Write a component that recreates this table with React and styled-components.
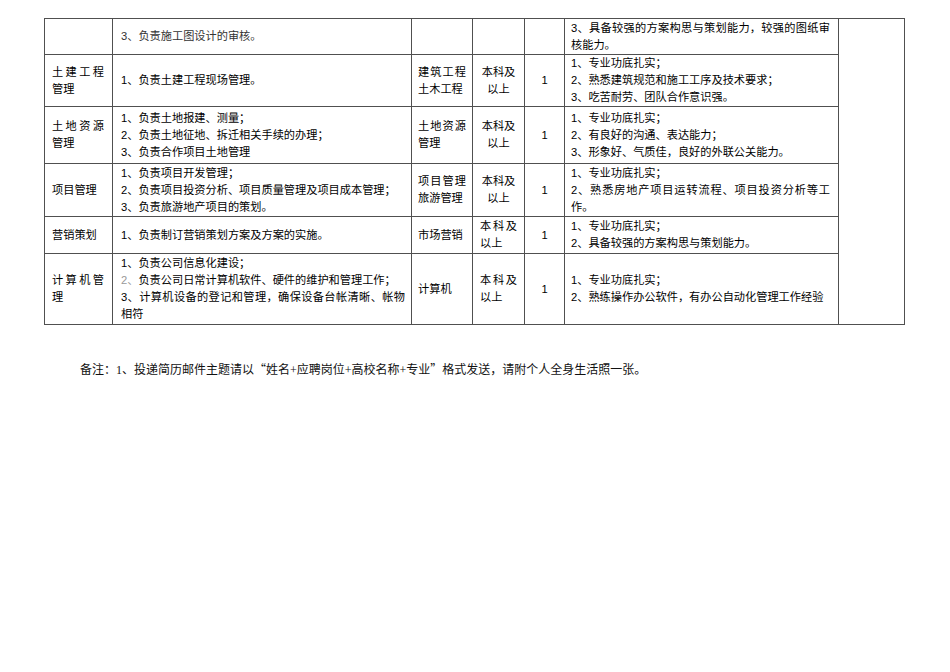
import React from 'react';
import styled, { createGlobalStyle } from 'styled-components';

const GlobalStyle = createGlobalStyle`
  html, body {
    margin: 0;
    padding: 0;
    background: #fff;
  }
`;

const Page = styled.div`
  width: 950px;
  min-height: 672px;
  padding: 18px 0 0 44px;
  box-sizing: border-box;
  color: #000;
`;

const Sheet = styled.table`
  width: 860px;
  table-layout: fixed;
  border-collapse: collapse;
  font-family: "Liberation Sans", "Noto Sans CJK SC", sans-serif;
  font-size: 11.2px;
  line-height: 17px;
`;

const Row = styled.tr`
  height: ${(p) => p.$h}px;
`;

const Cell = styled.td`
  border: 1px solid #505050;
  padding: 0 ${(p) => p.$pr ?? 6}px 0 ${(p) => p.$pl ?? 6}px;
  vertical-align: middle;
  text-align: ${(p) => p.$align || 'justify'};
  text-align-last: ${(p) => p.$align || 'left'};
  word-break: break-all;
  color: ${(p) => (p.$soft ? '#333' : '#000')};
`;

const Line = styled.div``;

const Faded = styled.span`
  color: #999;
`;

const Note = styled.p`
  margin: 35px 0 0 36px;
  font-family: "Liberation Serif", "Noto Sans CJK SC", serif;
  font-size: 12px;
  line-height: 18px;
  color: #111;
`;

const Quote = styled.span`
  font-family: "Noto Sans CJK SC", sans-serif;
`;

const rows = [
  {
    h: 36,
    title: '',
    duties: [<span key="a">3、负责施工图设计的审核。</span>],
    soft: true,
    major: '',
    degree: '',
    count: '',
    reqs: ['3、具备较强的方案构思与策划能力，较强的图纸审核能力。'],
  },
  {
    h: 51,
    title: '土建工程管理',
    duties: ['1、负责土建工程现场管理。'],
    major: '建筑工程土木工程',
    degree: '本科及以上',
    center: true,
    count: '1',
    reqs: ['1、专业功底扎实；', '2、熟悉建筑规范和施工工序及技术要求；', '3、吃苦耐劳、团队合作意识强。'],
  },
  {
    h: 57,
    title: '土地资源管理',
    duties: ['1、负责土地报建、测量；', '2、负责土地征地、拆迁相关手续的办理；', '3、负责合作项目土地管理'],
    major: '土地资源管理',
    degree: '本科及以上',
    center: true,
    count: '1',
    reqs: ['1、专业功底扎实；', '2、有良好的沟通、表达能力；', '3、形象好、气质佳，良好的外联公关能力。'],
  },
  {
    h: 53,
    title: '项目管理',
    duties: ['1、负责项目开发管理；', '2、负责项目投资分析、项目质量管理及项目成本管理；', '3、负责旅游地产项目的策划。'],
    major: '项目管理旅游管理',
    degree: '本科及以上',
    center: true,
    count: '1',
    reqs: ['1、专业功底扎实；', '2、熟悉房地产项目运转流程、项目投资分析等工作。'],
  },
  {
    h: 37,
    title: '营销策划',
    duties: ['1、负责制订营销策划方案及方案的实施。'],
    major: '市场营销',
    degree: '本科及以上',
    count: '1',
    reqs: ['1、专业功底扎实；', '2、具备较强的方案构思与策划能力。'],
  },
  {
    h: 71,
    title: '计算机管理',
    duties: [
      '1、负责公司信息化建设；',
      <span key="b"><Faded>2、</Faded>负责公司日常计算机软件、硬件的维护和管理工作；</span>,
      '3、计算机设备的登记和管理，确保设备台帐清晰、帐物相符',
    ],
    major: '计算机',
    degree: '本科及以上',
    count: '1',
    reqs: ['1、专业功底扎实；', '2、熟练操作办公软件，有办公自动化管理工作经验'],
  },
];

export default function App() {
  return (
    <>
      <GlobalStyle />
      <Page>
        <Sheet>
          <colgroup>
            <col style={{ width: 68 }} />
            <col style={{ width: 299 }} />
            <col style={{ width: 61 }} />
            <col style={{ width: 52 }} />
            <col style={{ width: 40 }} />
            <col style={{ width: 274 }} />
            <col style={{ width: 66 }} />
          </colgroup>
          <tbody>
            {rows.map((r, i) => (
              <Row key={i} $h={r.h}>
                <Cell $pl={7} $pr={8}>{r.title}</Cell>
                <Cell $pl={8} $soft={r.soft}>
                  {r.duties.map((d, j) => (
                    <Line key={j}>{d}</Line>
                  ))}
                </Cell>
                <Cell>{r.major}</Cell>
                <Cell $pl={7} $pr={7} $align={r.center ? 'center' : undefined}>
                  {r.degree}
                </Cell>
                <Cell $align="center">{r.count}</Cell>
                <Cell $pl={6} $pr={8}>
                  {r.reqs.map((q, j) => (
                    <Line key={j}>{q}</Line>
                  ))}
                </Cell>
                {i === 0 && <Cell rowSpan={rows.length} />}
              </Row>
            ))}
          </tbody>
        </Sheet>
        <Note>
          备注：1、投递简历邮件主题请以<Quote>“</Quote>姓名+应聘岗位+高校名称+专业<Quote>”</Quote>格式发送，请附个人全身生活照一张。
        </Note>
      </Page>
    </>
  );
}
